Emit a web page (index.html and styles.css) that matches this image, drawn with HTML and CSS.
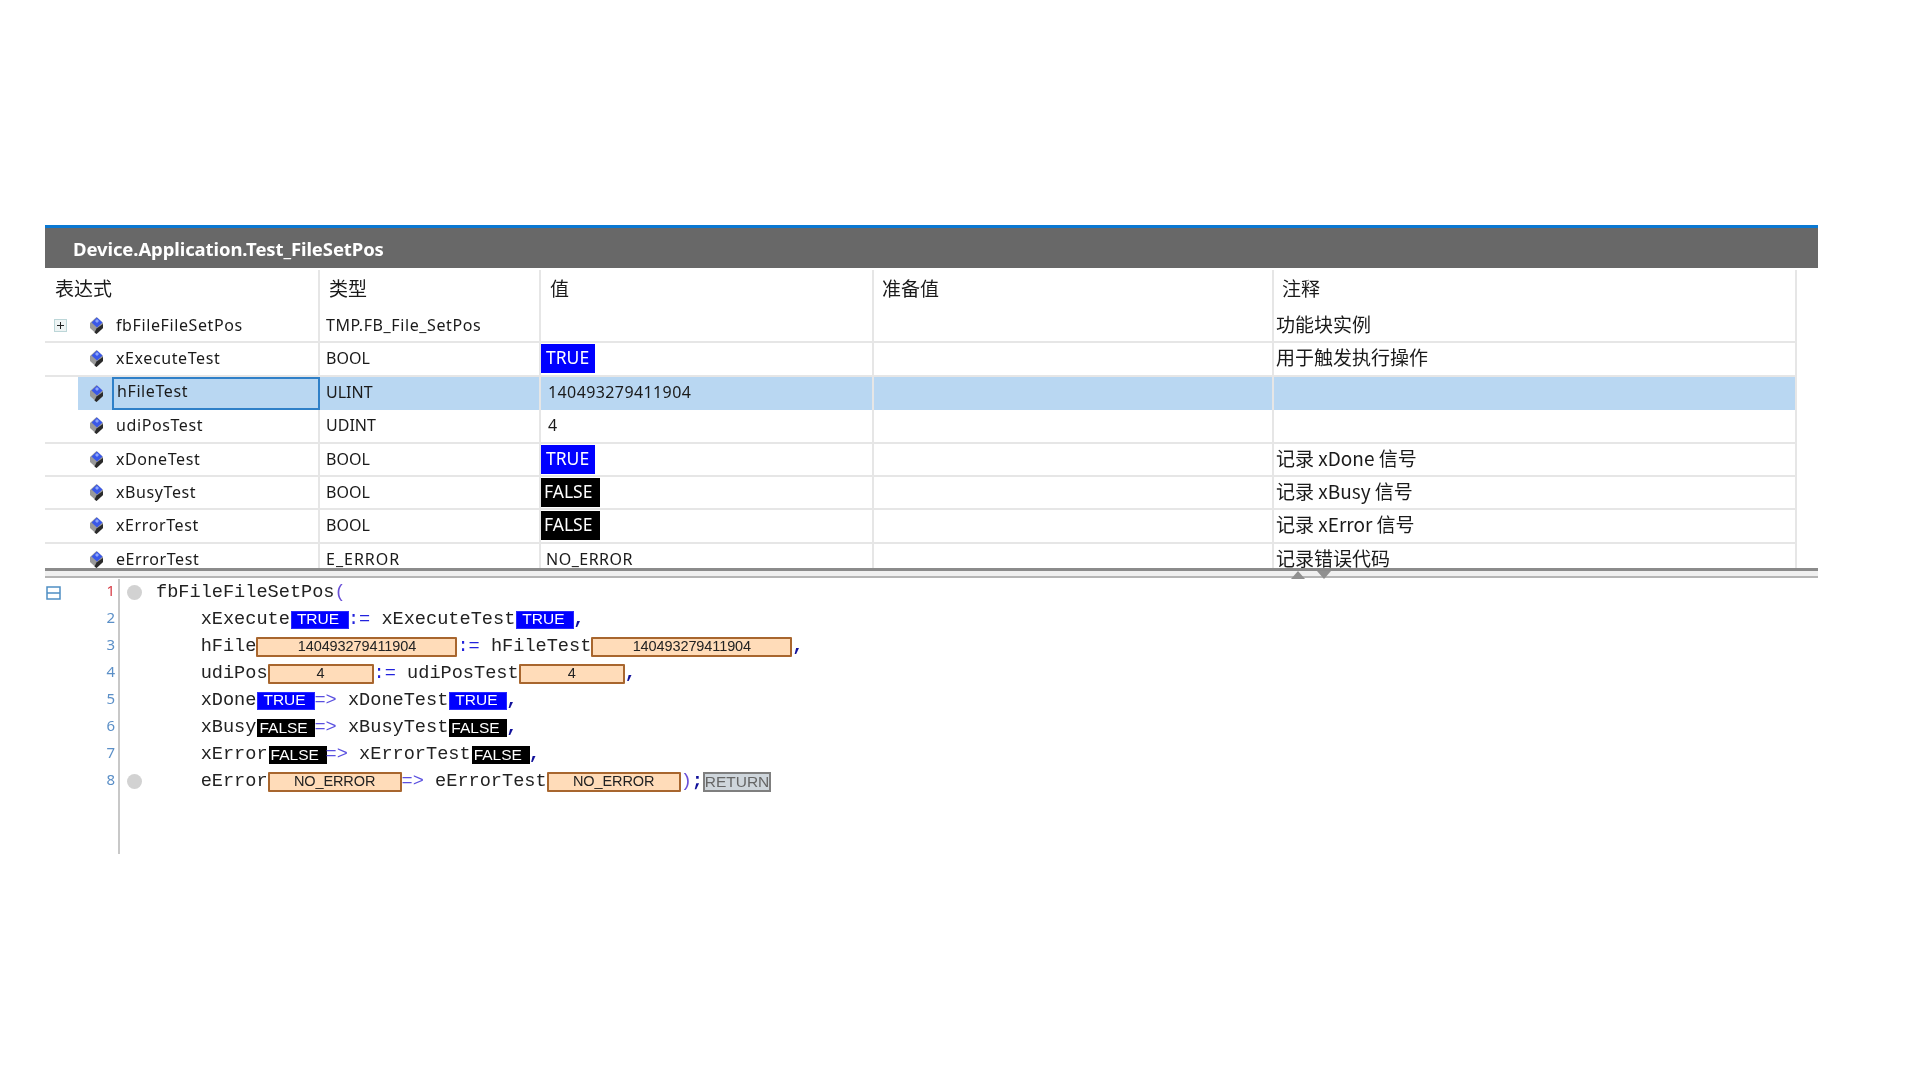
FILE: index.html
```html
<!DOCTYPE html>
<html lang="zh">
<head>
<meta charset="utf-8">
<title>Device.Application.Test_FileSetPos</title>
<link rel="stylesheet" href="styles.css">
</head>
<body>
<svg class="defs" width="0" height="0"><symbol id="var" viewBox="0 0 15 19"><path d="M7.500 1 14 7v5l-6.500 6L1 12V7z" fill="#999"/><path d="M7.500 12.500 14 8v4l-6.500 6-2-1.500z" fill="#2a2a2a"/><path d="M8 1.500 13.500 6.500 8 11.500 2.500 6.500z" fill="#3a58e8"/><path d="M8 3 10 5 8 7 6 5z" fill="#8ea6fa"/></symbol></svg>
<main class="panel">
  <div class="title">Device.Application.Test_FileSetPos</div>
  <section class="watch">
    <div class="row head">
      <div class="cell h-first">表达式</div><div class="cell h-type">类型</div><div class="cell h-val">值</div><div class="cell h-val2">准备值</div><div class="cell h-note">注释</div>
    </div>
    <div class="row">
      <div class="cell name"><span class="plus"></span><svg class="ico"><use href="#var"/></svg>fbFileFileSetPos</div><div class="cell type wide">TMP.FB_File_SetPos</div><div class="cell val"></div><div class="cell"></div><div class="cell note">功能块实例</div>
    </div>
    <div class="row">
      <div class="cell name"><span class="gap"></span><svg class="ico"><use href="#var"/></svg>xExecuteTest</div><div class="cell type">BOOL</div><div class="cell val"><span class="flag on">TRUE</span></div><div class="cell"></div><div class="cell note">用于触发执行操作</div>
    </div>
    <div class="row sel">
      <div class="cell name"><span class="gap"></span><svg class="ico"><use href="#var"/></svg><span class="focus">hFileTest</span></div><div class="cell type">ULINT</div><div class="cell val text">140493279411904</div><div class="cell"></div><div class="cell note"></div>
    </div>
    <div class="row">
      <div class="cell name"><span class="gap"></span><svg class="ico"><use href="#var"/></svg>udiPosTest</div><div class="cell type">UDINT</div><div class="cell val text">4</div><div class="cell"></div><div class="cell note"></div>
    </div>
    <div class="row">
      <div class="cell name"><span class="gap"></span><svg class="ico"><use href="#var"/></svg>xDoneTest</div><div class="cell type">BOOL</div><div class="cell val"><span class="flag on">TRUE</span></div><div class="cell"></div><div class="cell note">记录 xDone 信号</div>
    </div>
    <div class="row">
      <div class="cell name"><span class="gap"></span><svg class="ico"><use href="#var"/></svg>xBusyTest</div><div class="cell type">BOOL</div><div class="cell val"><span class="flag off">FALSE</span></div><div class="cell"></div><div class="cell note">记录 xBusy 信号</div>
    </div>
    <div class="row">
      <div class="cell name"><span class="gap"></span><svg class="ico"><use href="#var"/></svg>xErrorTest</div><div class="cell type">BOOL</div><div class="cell val"><span class="flag off">FALSE</span></div><div class="cell"></div><div class="cell note">记录 xError 信号</div>
    </div>
    <div class="row">
      <div class="cell name"><span class="gap"></span><svg class="ico"><use href="#var"/></svg>eErrorTest</div><div class="cell type wider">E_ERROR</div><div class="cell val text low">NO_ERROR</div><div class="cell"></div><div class="cell note">记录错误代码</div>
    </div>
  </section>
  <div class="split"><span class="tri up"></span><span class="tri down"></span></div>
  <section class="code">
    <div class="line"><span class="fold"><svg width="15" height="14" viewBox="0 0 15 14"><path d="M1 1h13v12H1zM1 7h13" fill="none" stroke="#4f8fc4" stroke-width="1.500"/></svg></span><span class="ln red">1</span><span class="bar"><i class="dot"></i></span><span class="src">fbFileFileSetPos<b class="pu">(</b></span></div>
    <div class="line"><span class="fold"></span><span class="ln">2</span><span class="bar"></span><span class="src">    xExecute<span class="pill on">TRUE</span><b class="op">:=</b> xExecuteTest<span class="pill on">TRUE</span><b class="cm">,</b></span></div>
    <div class="line"><span class="fold"></span><span class="ln">3</span><span class="bar"></span><span class="src">    hFile<span class="pill or w18">140493279411904</span><b class="op">:=</b> hFileTest<span class="pill or w18">140493279411904</span><b class="cm">,</b></span></div>
    <div class="line"><span class="fold"></span><span class="ln">4</span><span class="bar"></span><span class="src">    udiPos<span class="pill or w4">4</span><b class="op">:=</b> udiPosTest<span class="pill or w4">4</span><b class="cm">,</b></span></div>
    <div class="line"><span class="fold"></span><span class="ln">5</span><span class="bar"></span><span class="src">    xDone<span class="pill on">TRUE</span><b class="ar">=&gt;</b> xDoneTest<span class="pill on">TRUE</span><b class="cm">,</b></span></div>
    <div class="line"><span class="fold"></span><span class="ln">6</span><span class="bar"></span><span class="src">    xBusy<span class="pill off">FALSE</span><b class="ar">=&gt;</b> xBusyTest<span class="pill off">FALSE</span><b class="cm">,</b></span></div>
    <div class="line"><span class="fold"></span><span class="ln">7</span><span class="bar"></span><span class="src">    xError<span class="pill off">FALSE</span><b class="ar">=&gt;</b> xErrorTest<span class="pill off">FALSE</span><b class="cm">,</b></span></div>
    <div class="line"><span class="fold"></span><span class="ln">8</span><span class="bar"><i class="dot"></i></span><span class="src">    eError<span class="pill or wn">NO_ERROR</span><b class="ar">=&gt;</b> eErrorTest<span class="pill or wn">NO_ERROR</span><b class="pu">)</b><b class="cm">;</b><span class="pill ret">RETURN</span></span></div>
    <div class="line tail"><span class="fold"></span><span class="ln"></span><span class="bar"></span></div>
  </section>
</main>
</body>
</html>
```
FILE: styles.css
```css
* { box-sizing: border-box; }
html, body { margin: 0; background: #fff; }
.defs { position: absolute; }
.panel { width: 1818px; padding: 225px 0 0 45px; color: #1a1a1a; font-family: "Noto Sans", "Noto Sans CJK SC", sans-serif; filter: blur(.3px); }
.title { height: 43px; border-top: 3px solid #0a78d2; background: #686868; color: #fff; font: bold 18.500px/42px "Noto Sans", sans-serif; padding-left: 28px; letter-spacing: -.1px; }
.watch { height: 300px; overflow: hidden; padding-top: 2px; }
.row { display: grid; grid-template-columns: 275px 221px 333px 400px 523px; width: 1752px; height: 33.4px; border-bottom: 2px solid #e6e6e6; font-size: 16px; line-height: 31px; }
.head { height: 40px; border-bottom: 0; font: 19px/36px "Noto Sans CJK SC", sans-serif; }
.cell { border-right: 2px solid #e6e6e6; min-width: 0; white-space: nowrap; }
.h-first { padding-left: 10px; }
.h-type { padding-left: 9px; }
.h-val { padding-left: 9px; }
.h-val2 { padding-left: 8px; }
.h-note { padding-left: 8px; }
.name { display: flex; align-items: center; padding: 0 0 2px 9px; letter-spacing: .6px; }
.plus { position: relative; width: 13px; height: 13px; border: 1px solid #bcd6d8; background: #eef4f4; margin-right: 22px; flex: none; }
.plus::before { content: ""; position: absolute; left: 2px; top: 4.500px; width: 7px; height: 1.500px; background: #222; }
.plus::after { content: ""; position: absolute; left: 4.800px; top: 2px; width: 1.500px; height: 7px; background: #222; }
.gap { width: 35px; flex: none; }
.ico { width: 15px; height: 19px; margin-right: 12px; flex: none; }
.type { padding-left: 6px; }
.wide { letter-spacing: .6px; }
.wider { letter-spacing: 1px; }
.val { padding-left: 0; }
.text { padding-left: 7px; letter-spacing: .4px; }
.low { padding-left: 5px; letter-spacing: .5px; }
.note { padding-left: 2px; font: 19px/28px "Noto Sans CJK SC", sans-serif; }
.flag { display: block; height: 29px; margin-top: 1px; color: #fff; padding-left: 5px; font-size: 17.500px; line-height: 27px; }
.flag.on { width: 54px; background: #0000ff; }
.flag.off { width: 59px; background: #000; padding-left: 3px; }
.sel .name { background: linear-gradient(to right, #fff 33px, #b9d7f2 33px); padding-bottom: 0; }
.sel .cell:not(.name) { background: #b9d7f2; }
.focus { height: 33px; flex: 1; margin: 0 -2px 0 -4px; padding-left: 3px; border: 2px solid #2f80c8; line-height: 25px; }
.split { position: relative; height: 10px; border-top: 3px solid #8b8b8b; border-bottom: 2px solid #b5b5b5; background: #f0f0f0; }
.tri { position: absolute; top: 0; width: 0; height: 0; border-left: 7px solid transparent; border-right: 7px solid transparent; }
.up { left: 1246px; border-bottom: 8px solid #909090; }
.down { left: 1272px; border-top: 8px solid #909090; }
.code { padding-top: 1px; }
.line { display: flex; height: 27px; align-items: center; font: 18.6px/27px "Liberation Mono", monospace; white-space: pre; color: #222; }
.tail { height: 59px; }
.fold { width: 30px; padding-left: 1px; display: flex; align-items: center; }
.ln { width: 40px; text-align: right; font: 15px/22px "Noto Sans", sans-serif; color: #5b8fc7; align-self: flex-start; }
.ln.red { color: #d8404a; }
.bar { position: relative; width: 38px; height: 100%; margin-left: 3px; border-left: 2px solid #c8c8c8; flex: none; display: flex; align-items: center; }
.dot { width: 15px; height: 15px; border-radius: 50%; background: #d2d2d2; margin-left: 7px; }
.src { display: flex; align-items: center; }
b { font-weight: normal; }
.op { color: #2222dd; }
.ar { color: #5a50e0; }
.cm { color: #10109a; font-weight: bold; }
.pu { color: #6a50d8; }
.pill { display: flex; align-items: center; justify-content: center; font: 15.500px/1 "Liberation Sans", sans-serif; }
.pill.on { width: 58px; height: 18px; margin-left: 1px; margin-right: -1px; background: #0000ff; color: #fff; border: 1px solid #2a2aff; padding: 0 0 1px 5px; justify-content: flex-start; }
.pill.off { width: 58px; height: 18px; margin-left: 1px; margin-right: -1px; background: #000; color: #fff; padding-left: 2px; justify-content: flex-start; }
.or { height: 20px; background: #ffdcb9; border: 2px solid #a8662e; border-radius: 1px; color: #222; font-size: 14.500px; letter-spacing: -.1px; }
.w18 { width: 201px; }
.w4 { width: 106px; }
.wn { width: 134px; }
.ret { width: 68px; height: 20px; background: #cfd6dc; border: 2px solid #7f7f7f; color: #666; }
```
